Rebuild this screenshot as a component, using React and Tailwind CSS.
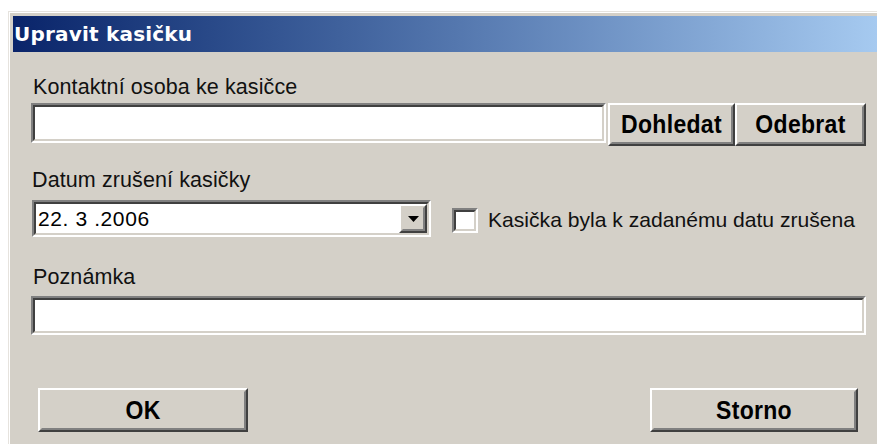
import React from 'react';

// classic 3D bevels
const Sunken = ({ className = '', children }) => (
  <div className={`border-2 border-t-[#808080] border-l-[#808080] border-r-white border-b-white ${className}`}>
    <div className="h-full border-2 border-t-[#404040] border-l-[#404040] border-r-[#d4d0c8] border-b-[#d4d0c8] bg-white">
      {children}
    </div>
  </div>
);

const Button = ({ className = '', children }) => (
  <button className={`border-2 border-t-white border-l-white border-r-[#404040] border-b-[#404040] bg-[#d4d0c8] p-0 ${className}`}>
    <div className="h-full flex items-center justify-center border-2 border-t-[#d4d0c8] border-l-[#d4d0c8] border-r-[#808080] border-b-[#808080]">
      <span className="inline-block scale-y-115 font-bold text-[23px] leading-none tracking-[0.3px] text-black">{children}</span>
    </div>
  </button>
);

const Label = ({ className = '', children }) => (
  <div className={`leading-[24px] text-[#111] ${className}`}>{children}</div>
);

export default function App() {
  return (
    <div className="w-[877px] h-[444px] overflow-hidden bg-white pl-[8px] pt-[11px]" style={{ fontFamily: '"Liberation Sans", Arial, sans-serif' }}>
      <div className="h-full border-t border-l border-[#e6e3de]">
        <div className="h-full border-t border-l border-white bg-[#d4d0c8] pl-[3px] pt-[3px]">
          {/* title bar */}
          <div className="h-[36px] flex items-center pl-[1px] bg-gradient-to-r from-[#0a246a] to-[#a6caf0]">
            <span className="text-white font-bold text-[20px] tracking-[0.2px]" style={{ fontFamily: '"DejaVu Sans", Verdana, sans-serif' }}>
              Upravit kasičku
            </span>
          </div>

          <div className="pl-[18px] pr-[11px]">
            <Label className="mt-[23px] pl-[2px] text-[21.5px] tracking-[0.1px]">Kontaktní osoba ke kasičce</Label>
            <div className="mt-[4px] flex items-start">
              <Sunken className="flex-1 h-[40px]" />
              <Button className="ml-[2px] w-[127px] h-[43px]">Dohledat</Button>
              <Button className="w-[131px] h-[43px]">Odebrat</Button>
            </div>

            <Label className="mt-[22px] pl-[1px] text-[21.5px] tracking-[0.1px]">Datum zrušení kasičky</Label>
            <div className="mt-[8px] flex items-center">
              <Sunken className="w-[399px] h-[37px] ml-[1px]">
                <div className="h-full flex items-center">
                  <span className="flex-1 pl-[2px] text-[21px] text-black tracking-[0.6px]">22. 3 .2006</span>
                  <div className="w-[28px] h-full border-2 border-t-white border-l-white border-r-[#404040] border-b-[#404040] bg-[#d4d0c8]">
                    <div className="h-full flex items-center justify-center border-2 border-t-[#d4d0c8] border-l-[#d4d0c8] border-r-[#808080] border-b-[#808080]">
                      <svg width="11" height="6" viewBox="0 0 11 6">
                        <path d="M0 0h11L5.5 6z" fill="#000" />
                      </svg>
                    </div>
                  </div>
                </div>
              </Sunken>
              <Sunken className="ml-[21px] w-[26px] h-[25px] mt-[3px]" />
              <Label className="ml-[10px] mt-[2px] text-[21.1px]">Kasička byla k zadanému datu zrušena</Label>
            </div>

            <Label className="mt-[28px] pl-[2px] text-[21.5px] tracking-[0.1px]">Poznámka</Label>
            <Sunken className="mt-[7px] h-[39px]" />

            <div className="mt-[53px] flex justify-between pl-[7px] pr-[8px]">
              <Button className="w-[210px] h-[44px]">OK</Button>
              <Button className="w-[208px] h-[44px]">Storno</Button>
            </div>
          </div>
        </div>
      </div>
    </div>
  );
}
